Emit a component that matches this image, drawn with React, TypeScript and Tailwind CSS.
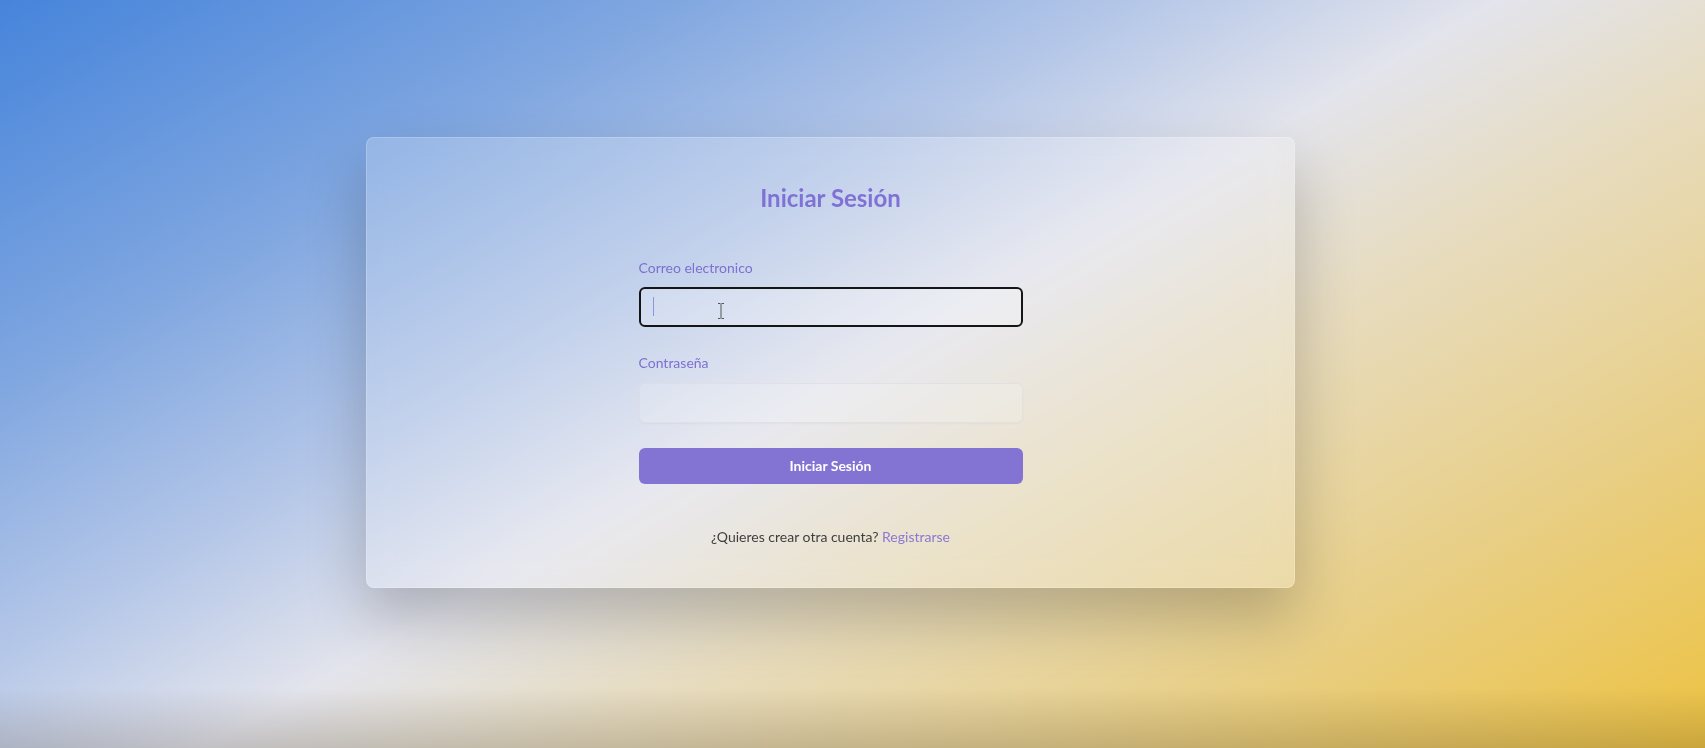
export default function App() {
  return (
    <div
      className="min-h-[748px] w-full bg-[linear-gradient(to_bottom,transparent_92%,rgba(60,50,40,0.2)),linear-gradient(150deg,#4684db_0%,#7fa6e0_22%,#b5c7e8_38%,#e3e4ec_50%,#e7dcc0_62%,#e8cf88_80%,#edc241_100%)] pt-[137px] pr-[44px] flex justify-center"
      style={{ fontFamily: 'Lato, "Noto Sans", sans-serif' }}
    >
      <div className="w-[929px] h-[451px] rounded-lg bg-white/20 border border-white/20 backdrop-blur-md shadow-[0_30px_60px_rgba(0,0,0,0.22)] pt-[44px] flex flex-col items-center">
        <h1 className="text-2xl leading-8 font-bold text-[#8072d4]">
          Iniciar Sesión
        </h1>

        <form className="w-96 mt-[44px] flex flex-col">
          <label className="text-sm leading-5 text-[#7d70d0]">
            Correo electronico
          </label>
          <div className="relative mt-[9px]">
            <input
              type="email"
              className="w-full h-10 rounded-md border-2 border-[#151515] bg-white/20 px-3 outline-none"
            />
            <span className="absolute left-[14px] top-[10px] h-[19px] w-px bg-[#8f92dc]" />
            <svg
              className="absolute left-[78px] top-[16px]"
              width="8"
              height="16"
              viewBox="0 0 8 16"
              fill="none"
              stroke="#555"
              strokeWidth="1"
            >
              <path d="M1 0.5h2.5M4.5 0.5H7M4 1v14M1 15.5h2.5M4.5 15.5H7" />
            </svg>
          </div>

          <label className="text-sm leading-5 text-[#7d70d0] mt-[26px]">
            Contraseña
          </label>
          <input
            type="password"
            className="mt-[10px] w-full h-10 rounded-md border border-[#dedde2]/80 bg-white/15 px-3 outline-none shadow-[0_1px_2px_rgba(0,0,0,0.04)]"
          />

          <button
            type="button"
            className="mt-[25px] h-9 w-full rounded-md bg-[#8373d3] text-sm font-bold text-white"
          >
            Iniciar Sesión
          </button>
        </form>

        <p className="mt-[43px] text-sm leading-5 text-[#3e3e3e]">
          ¿Quieres crear otra cuenta?{' '}
          <a href="#" className="text-[#8a78d4]">
            Registrarse
          </a>
        </p>
      </div>
    </div>
  );
}
